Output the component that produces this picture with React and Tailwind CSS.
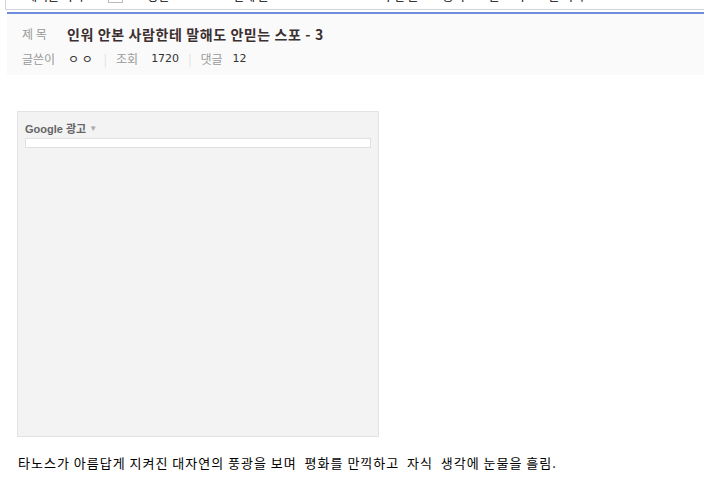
import React from 'react';

const KR = { fontFamily: '"Noto Sans CJK KR", "Liberation Sans", sans-serif' };
const NUM = { fontFamily: 'Tahoma, "DejaVu Sans", sans-serif' };

export default function App() {
  return (
    <div className="w-[704px] h-[495px] bg-white overflow-hidden" style={KR}>
      {/* cut-off toolbar row above the post */}
      <div className="ml-[5px] h-[10px] border-l border-b border-[#d5d5d5] overflow-hidden">
        <div className="flex items-center gap-6 -mt-[11px] pl-[20px] text-[12px] leading-[14px] text-black">
          <span>게시물 목록</span>
          <span className="w-[15px] h-[13px] border border-[#bbb] bg-white" />
          <span>정렬</span>
          <span className="ml-[40px]">전체 글</span>
          <span className="ml-[90px]">추천 글</span>
          <span>공지</span>
          <span>글 쓰기</span>
          <span>글 목록</span>
        </div>
      </div>

      {/* post header */}
      <div className="ml-[7px] mt-[2px] border-t-2 border-[#6d8bdb] bg-[#fafafa] h-[63px] pl-[15px] pt-[9px]">
        <div className="flex items-center h-[22px]">
          <span className="w-[45px] text-[12px] text-[#999]">제 목</span>
          <span className="text-[14px] font-bold text-[#3b2f2f] tracking-[0.6px]">인워 안본 사람한테 말해도 안믿는 스포 - 3</span>
        </div>
        <div className="flex items-center mt-[5px] text-[12px] text-[#999]">
          <span className="w-[46px]">글쓴이</span>
          <span className="text-[#333]">ㅇ ㅇ</span>
          <span className="ml-[11px] mr-[9px] text-[#ddd]">|</span>
          <span>조회</span>
          <span className="ml-[13px] text-[#333] text-[11px]" style={NUM}>1720</span>
          <span className="mx-[9px] text-[#ddd]">|</span>
          <span>댓글</span>
          <span className="ml-[10px] text-[#333] text-[11px]" style={NUM}>12</span>
        </div>
      </div>

      {/* ad box */}
      <div className="ml-[17px] mt-[36px] w-[362px] h-[326px] bg-[#f3f3f3] border border-[#e3e3e3] px-[7px] pt-[10px]">
        <div className="flex items-center gap-[3px] text-[11px] font-bold text-[#666] leading-[14px]" style={{ fontFamily: '"Liberation Sans", "Noto Sans CJK KR", sans-serif' }}>
          <span>Google 광고</span>
          <span className="text-[8px] text-[#aaa] font-normal">▼</span>
        </div>
        <div className="mt-[2px] h-[10px] bg-white border border-[#e0e0e0]" />
      </div>

      {/* body */}
      <p className="ml-[18px] mt-[16px] text-[13px] text-black tracking-[1px]">
        타노스가 아름답게 지켜진 대자연의 풍광을 보며&nbsp; 평화를 만끽하고&nbsp; 자식&nbsp; 생각에 눈물을 흘림.
      </p>
    </div>
  );
}
